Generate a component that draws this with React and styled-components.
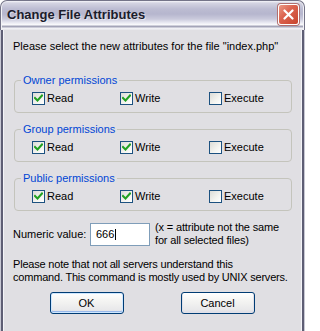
import React from "react";
import styled, { createGlobalStyle } from "styled-components";

const GlobalStyle = createGlobalStyle`
  html, body {
    margin: 0;
    padding: 0;
    background: #fff;
  }
  body {
    font-family: "Liberation Sans", Arial, sans-serif;
  }
`;

const Window = styled.div`
  width: 305px;
  height: 331px;
  overflow: hidden;
  display: flex;
  flex-direction: column;
  font-family: "Liberation Sans", Arial, sans-serif;
  font-size: 11px;
  line-height: 13px;
  color: #000;
`;

const TitleBar = styled.div`
  flex: none;
  height: 30px;
  box-sizing: border-box;
  display: flex;
  align-items: center;
  justify-content: space-between;
  padding: 0 5px 2px 6px;
  border: 1px solid #747488;
  border-bottom: none;
  border-radius: 7px 7px 0 0;
  background: linear-gradient(
    to bottom,
    #f6f6fa 0px,
    #d4d4e2 2px,
    #bcbcd2 8px,
    #b6b6ce 13px,
    #cacadc 18px,
    #ececf4 22px,
    #fbfbfd 24px,
    #a4a4b8 25px,
    #a4a4b8 26px,
    #f4f4f8 27px,
    #e6e5ea 29px
  );
  box-shadow: inset 1px 0 0 #f2f2f6, inset -1px 0 0 #f2f2f6;
`;

const Title = styled.div`
  font-family: "Liberation Sans", Arial, sans-serif;
  font-weight: bold;
  font-size: 13px;
  color: #1c1c2c;
  text-shadow: 1px 1px 0 rgba(255, 255, 255, 0.5);
`;

const CloseButton = styled.div`
  width: 21px;
  height: 21px;
  box-sizing: border-box;
  display: flex;
  align-items: center;
  justify-content: center;
  border: 1px solid #fff;
  border-radius: 3px;
  background: linear-gradient(135deg, #eb9a86 0%, #dc6450 40%, #c8442e 100%);
  box-shadow: 0 0 0 1px #b07070;
`;

const Body = styled.div`
  flex: 1;
  background: #e0dfe3;
  padding: 10px 13px 0 13px;
  box-shadow: inset 1px 0 0 #c8c8d4, inset 3px 0 0 #5e5e74, inset 4px 0 0 #f4f4f8,
    inset -1px 0 0 #c8c8d4, inset -3px 0 0 #5e5e74, inset -4px 0 0 #f4f4f8;
`;

const Intro = styled.div`
  margin-bottom: 21px;
  white-space: nowrap;
`;

const Group = styled.fieldset`
  margin: 0 0 10px 1px;
  padding: 5px 0 7px 6px;
  min-width: 0;
  border: 1px solid #c4c4bc;
  border-radius: 4px;
`;

const Legend = styled.legend`
  padding: 0 2px;
  color: #0046d5;
  line-height: 13px;
`;

const CheckRow = styled.div`
  display: grid;
  grid-template-columns: 88px 89px auto;
  margin-left: 11px;
`;

const CheckItem = styled.label`
  display: flex;
  align-items: center;
  gap: 2px;
`;

const Box = styled.span`
  width: 13px;
  height: 13px;
  box-sizing: border-box;
  border: 1px solid #1c5180;
  background: linear-gradient(135deg, #dcdcd7 0%, #f4f4f0 60%, #fff 100%);
  display: flex;
  align-items: center;
  justify-content: center;
`;

const NumericRow = styled.div`
  display: flex;
  align-items: flex-start;
  margin-top: 3px;
`;

const NumericLabel = styled.div`
  width: 77px;
  margin-top: 7px;
  white-space: nowrap;
`;

const TextBox = styled.div`
  width: 60px;
  height: 23px;
  margin-top: 2px;
  box-sizing: border-box;
  border: 1px solid #7f9db9;
  background: #fff;
  padding-left: 5px;
  display: flex;
  align-items: center;
`;

const Caret = styled.span`
  display: inline-block;
  width: 1px;
  height: 11px;
  margin-left: 1px;
  background: #000;
`;

const Hint = styled.div`
  margin-left: 5px;
  white-space: nowrap;
  letter-spacing: -0.15px;
`;

const Note = styled.div`
  margin-top: 11px;
  white-space: nowrap;
  letter-spacing: -0.2px;
`;

const ButtonRow = styled.div`
  display: flex;
  justify-content: center;
  gap: 57px;
  margin-top: 8px;
  padding-right: 1px;
`;

const Button = styled.button`
  width: 74px;
  height: 22px;
  box-sizing: border-box;
  padding: 0;
  border: 1px solid #003c74;
  border-radius: 3px;
  font-family: "Liberation Sans", Arial, sans-serif;
  font-size: 11px;
  color: #000;
  background: linear-gradient(to bottom, #fff 0%, #f4f4f2 40%, #e8e8ea 85%, #d4d4dc 100%);
  box-shadow: ${(p) =>
    p.$default
      ? "inset 0 0 0 1px #cee7ff, inset 0 -1px 0 1px #98b8ea"
      : "inset 0 -1px 0 1px #e0e0e8"};
`;

const Check = () => (
  <svg width="9" height="9" viewBox="0 0 9 9">
    <polyline
      points="1,4 3.5,6.5 8,1.5"
      fill="none"
      stroke="#21a121"
      strokeWidth="2"
      strokeLinecap="square"
    />
  </svg>
);

const CheckBox = ({ checked, children }) => (
  <CheckItem>
    <Box>{checked && <Check />}</Box>
    {children}
  </CheckItem>
);

const groups = [
  { name: "Owner permissions", read: true, write: true, exec: false },
  { name: "Group permissions", read: true, write: true, exec: false },
  { name: "Public permissions", read: true, write: true, exec: false },
];

export default function App() {
  return (
    <>
      <GlobalStyle />
      <Window>
        <TitleBar>
          <Title>Change File Attributes</Title>
          <CloseButton>
            <svg width="11" height="11" viewBox="0 0 11 11">
              <path
                d="M1.5 1.5 L9.5 9.5 M9.5 1.5 L1.5 9.5"
                stroke="#fff"
                strokeWidth="2.2"
                strokeLinecap="round"
              />
            </svg>
          </CloseButton>
        </TitleBar>
        <Body>
          <Intro>Please select the new attributes for the file "index.php"</Intro>
          {groups.map((g) => (
            <Group key={g.name}>
              <Legend>{g.name}</Legend>
              <CheckRow>
                <CheckBox checked={g.read}>Read</CheckBox>
                <CheckBox checked={g.write}>Write</CheckBox>
                <CheckBox checked={g.exec}>Execute</CheckBox>
              </CheckRow>
            </Group>
          ))}
          <NumericRow>
            <NumericLabel>Numeric value:</NumericLabel>
            <TextBox>
              666
              <Caret />
            </TextBox>
            <Hint>
              (x = attribute not the same
              <br />
              for all selected files)
            </Hint>
          </NumericRow>
          <Note>
            Please note that not all servers understand this
            <br />
            command. This command is mostly used by UNIX servers.
          </Note>
          <ButtonRow>
            <Button $default>OK</Button>
            <Button>Cancel</Button>
          </ButtonRow>
        </Body>
      </Window>
    </>
  );
}
